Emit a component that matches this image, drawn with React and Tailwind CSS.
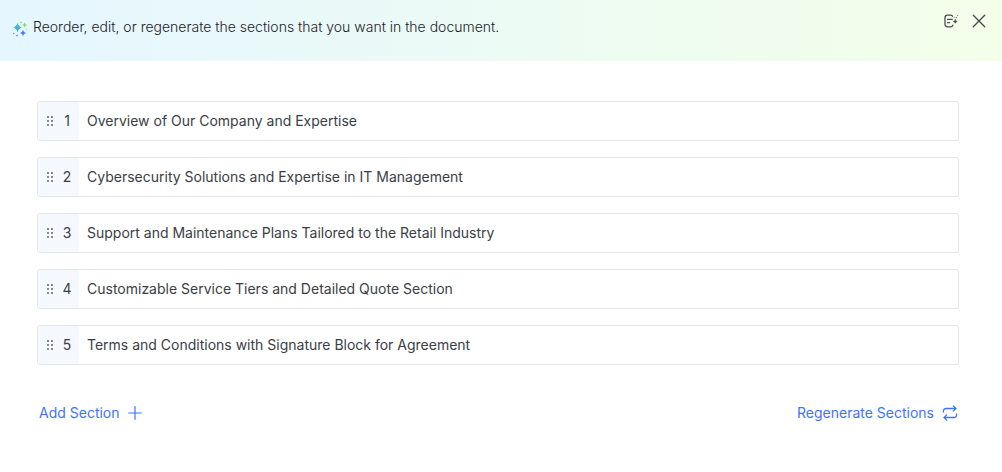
import { useState } from 'react';

const initialSections = [
    { id: 1, title: 'Overview of Our Company and Expertise' },
    { id: 2, title: 'Cybersecurity Solutions and Expertise in IT Management' },
    { id: 3, title: 'Support and Maintenance Plans Tailored to the Retail Industry' },
    { id: 4, title: 'Customizable Service Tiers and Detailed Quote Section' },
    { id: 5, title: 'Terms and Conditions with Signature Block for Agreement' },
];

const SparklesIcon = () => (
    <svg width="16" height="16" viewBox="0 0 16 16" aria-hidden="true">
        <defs>
            <linearGradient id="sparkle" x1="0" y1="0" x2="1" y2="1">
                <stop offset="0" stopColor="#4bd6ae" />
                <stop offset="1" stopColor="#3f96f5" />
            </linearGradient>
        </defs>
        <path d="M5.5 1.5Q6.3 5.7 10.2 6.5Q6.3 7.3 5.5 11.5Q4.7 7.3 0.8 6.5Q4.7 5.7 5.5 1.5Z" fill="url(#sparkle)" />
        <path d="M12.7 1.5Q13.1 3.6 15.2 4Q13.1 4.4 12.7 6.5Q12.3 4.4 10.2 4Q12.3 3.6 12.7 1.5Z" fill="#7be04c" />
        <path d="M11 9Q11.6 11.4 14 12Q11.6 12.6 11 15Q10.4 12.6 8 12Q10.4 11.4 11 9Z" fill="#477df5" />
        <circle cx="8.9" cy="1.5" r="0.8" fill="#7be04c" />
        <circle cx="14.7" cy="8.7" r="0.7" fill="#74dbc4" />
        <circle cx="1.8" cy="12.5" r="0.7" fill="#5b82fa" />
        <circle cx="5" cy="14.6" r="0.8" fill="#4f79f7" />
    </svg>
);

const PromptIcon = () => (
    <svg width="16" height="16" viewBox="0 0 16 16" fill="none" stroke="#4a4d52" strokeLinecap="round" aria-hidden="true">
        <path d="M9.5 3.2a2.5 2.5 0 0 0-2-1H4.5a2.5 2.5 0 0 0-2.5 2.5v6.6a2.5 2.5 0 0 0 2.5 2.5h3a2.5 2.5 0 0 0 2.4-1.6" strokeWidth="1.3" />
        <path d="M4.6 6.4h4.6M4.6 9.7h2" strokeWidth="1.3" />
        <path d="M12.2 6.4Q12.5 8.1 14.2 8.4Q12.5 8.7 12.2 10.4Q11.9 8.7 10.2 8.4Q11.9 8.1 12.2 6.4Z" fill="#4a4d52" strokeWidth="0.4" />
        <path d="M11.9 4.4h.1M14.7 2.6h.1M13.6 4.6h.1" strokeWidth="1" />
    </svg>
);

const CloseIcon = () => (
    <svg width="14" height="14" viewBox="0 0 14 14" stroke="#45484c" strokeWidth="1.3" strokeLinecap="round" aria-hidden="true">
        <path d="M1.3 1.3l11.4 11.4M12.7 1.3L1.3 12.7" />
    </svg>
);

const DragIcon = () => (
    <svg width="8" height="12" viewBox="0 0 8 12" fill="#83868b" aria-hidden="true">
        <path d="M1 1h2v2H1zM5 1h2v2H5zM1 5h2v2H1zM5 5h2v2H5zM1 9h2v2H1zM5 9h2v2H5z" />
    </svg>
);

const PlusIcon = () => (
    <svg width="14" height="14" viewBox="0 0 14 14" stroke="#3f73ff" strokeWidth="1.2" strokeLinecap="round" aria-hidden="true">
        <path d="M7 .7v12.6M.7 7h12.6" />
    </svg>
);

const RepeatIcon = () => (
    <svg width="16" height="16" viewBox="0 0 16 16" fill="none" stroke="#3f73ff" strokeWidth="1.3" strokeLinecap="round" strokeLinejoin="round" aria-hidden="true">
        <path d="M11.3 .9L14 3.5l-2.7 2.6M13.8 3.5H4a2.6 2.6 0 0 0-2.6 2.6v1" />
        <path d="M4.7 9.9L2 12.5l2.7 2.6M2.2 12.5H12a2.6 2.6 0 0 0 2.6-2.6v-1" />
    </svg>
);

const SectionRow = ({ number, title }) => (
    <li className="flex h-10 overflow-hidden rounded-[3px] border border-[#e5e6e8] bg-white">
        <div className="flex w-[41px] shrink-0 items-center justify-between bg-[#f5f9ff] pr-[6px] pl-2">
            <button type="button" aria-label={`Reorder section ${number}`} className="cursor-grab">
                <DragIcon />
            </button>
            <span className="w-3 text-center">{number}</span>
        </div>
        <span className="flex items-center pl-2">{title}</span>
    </li>
);

const App = () => {
    const [sections, setSections] = useState(initialSections);

    const addSection = () => {
        setSections([...sections, { id: sections.length + 1, title: 'New Section' }]);
    };

    return (
        <div className="min-h-screen bg-white font-[Inter,sans-serif] text-sm text-[#3a3e44]">
            <header className="flex justify-between bg-linear-to-r from-[#e5f6ff] to-[#f3ffe9] pt-3 pr-4 pb-6 pl-3">
                <div className="flex items-end gap-[5px] pt-[5px]">
                    <SparklesIcon />
                    <h1 className="font-light text-[#1d2126]">Reorder, edit, or regenerate the sections that you want in the document.</h1>
                </div>
                <div className="flex h-[18px] items-center gap-[13px]">
                    <button type="button" aria-label="Edit prompt">
                        <PromptIcon />
                    </button>
                    <button type="button" aria-label="Close">
                        <CloseIcon />
                    </button>
                </div>
            </header>
            <main className="pt-10 pr-[43px] pb-12 pl-[37px]">
                <ul className="flex flex-col gap-4">
                    {sections.map((section, index) => (
                        <SectionRow key={section.id} number={index + 1} title={section.title} />
                    ))}
                </ul>
                <div className="mt-[38px] flex items-center justify-between pr-px pl-[2px] text-[#3f73ff]">
                    <button type="button" onClick={addSection} className="flex items-center gap-2">
                        Add Section
                        <PlusIcon />
                    </button>
                    <button type="button" className="flex items-center gap-2">
                        Regenerate Sections
                        <RepeatIcon />
                    </button>
                </div>
            </main>
        </div>
    );
};

export default App;
